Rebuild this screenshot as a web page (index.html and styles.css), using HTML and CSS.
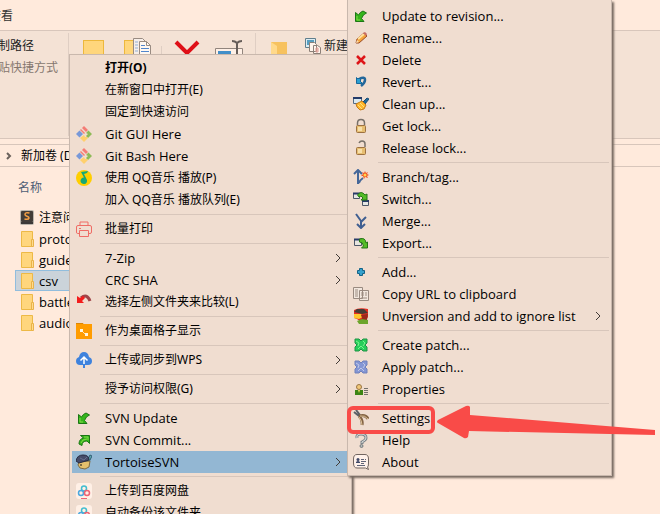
FILE: index.html
```html
<!DOCTYPE html>
<html lang="zh-CN">
<head>
<meta charset="utf-8">
<title>csv</title>
<link rel="stylesheet" href="styles.css">
</head>
<body>
<div class="explorer">
  <nav class="tabs"><a class="tab" href="#">查看</a></nav>
  <div class="ribbon">
    <div class="clipboard-group">
      <button class="ribbon-text">复制路径</button>
      <button class="ribbon-text disabled" disabled>粘贴快捷方式</button>
    </div>
    <div class="organize-group">
      <svg class="big-icon" viewBox="0 0 28 28"><rect x="4.500" y="2.500" width="20" height="24" fill="#ffd67c" stroke="#edb83c"/><path d="M22 16v4M19 18h4" stroke="#3d73bd"/></svg>
      <svg class="big-icon" viewBox="0 0 28 28"><rect x="1.500" y="2.500" width="12" height="24" fill="#ffd67c" stroke="#edb83c"/><path d="M10.500 .5h9l4 4v22h-13z" fill="#f7eee8" stroke="#998b82"/><path d="M16.500 3.500h7l4 4v20h-11z" fill="#fff8f2" stroke="#998b82"/><path d="M23.500 3.500v4h4" fill="none" stroke="#998b82"/><path d="M12 4h3M12 7h3M12 10h3M12 13h3" stroke="#91afd5"/><path d="M18 7.500h4M18 10.500h8M18 13.500h8M18 16.500h8" stroke="#5286cd"/></svg>
      <span class="small-divider"></span>
      <svg class="big-icon" viewBox="0 0 28 28"><path d="M3 4l11 11L25 4" fill="none" stroke="#df1018" stroke-width="4"/></svg>
      <svg class="big-icon" viewBox="3 0 28 28"><path d="M1.500 10.500h27v12h-27z" fill="#fff0e6" stroke="#91857d"/><path d="M4 13h13v8H4z" fill="#428fc9"/><path d="M18 3q3 0 5 2Q25 3 28 3M23 5v18" fill="none" stroke="#655d59" stroke-width="2"/></svg>
    </div>
    <div class="new-group">
      <svg class="folder-new" viewBox="0 0 18 24"><path d="M2 2h16v22H2z" fill="#f7c25f"/><path d="M2 2l6 4v18H2z" fill="#ffd98b"/></svg>
      <button class="ribbon-text new-item"><svg class="icon" viewBox="0 0 16 16"><path d="M.5.5h10v9H.5z" fill="#dcecf2" stroke="#607f8d"/><path d="M2 2h7v5H2z" fill="#569ec0"/><path d="M4.500 4.500h5l2 2v7h-7zM8.500 7.500h4l3 2v6h-7z" fill="#fff4ec" stroke="#8c8078"/><path d="M10 11h4M10 13h4M12 9v6" stroke="#de9a91"/></svg>新建项目</button>
    </div>
  </div>
  <div class="address"><svg class="chevron" viewBox="0 0 6 8"><path d="M1 1l3 3-3 3" /></svg><span>新加卷 (D:)</span></div>
  <main class="files">
    <h1 class="column-title">名称</h1>
    <ul class="file-list">
      <li class="file"><svg class="file-icon" viewBox="0 0 16 16"><rect width="14" height="15" rx="2" fill="#bcb6ad"/><rect x="1" y="1" width="12" height="11" rx="1" fill="#423d39"/><path d="M9.500 3Q5 2 5 4.500C5 7 9 5.500 9 8Q8.500 10 4.500 9" fill="none" stroke="#f6a044" stroke-width="1.500"/><path d="M1 13h12" stroke="#3c3938" stroke-width="2"/></svg><span>注意问题</span></li>
      <li class="file"><svg class="file-icon" viewBox="0 0 16 16"><path d="M1.500.5h11v15h-11z" fill="#ffd67d" stroke="#edb946"/><path d="M11.500 8.500h2v7h-2z" fill="#ffdb8f" stroke="#e9b349"/></svg><span class="latin">proto</span></li>
      <li class="file"><svg class="file-icon" viewBox="0 0 16 16"><path d="M1.500.5h11v15h-11z" fill="#ffd67d" stroke="#edb946"/><path d="M11.500 8.500h2v7h-2z" fill="#ffdb8f" stroke="#e9b349"/></svg><span class="latin">guide</span></li>
      <li class="file selected"><svg class="file-icon" viewBox="0 0 16 16"><path d="M1.500.5h11v15h-11z" fill="#ffd67d" stroke="#edb946"/><path d="M11.500 8.500h2v7h-2z" fill="#ffdb8f" stroke="#e9b349"/></svg><span class="latin">csv</span></li>
      <li class="file"><svg class="file-icon" viewBox="0 0 16 16"><path d="M1.500.5h11v15h-11z" fill="#ffd67d" stroke="#edb946"/><path d="M11.500 8.500h2v7h-2z" fill="#ffdb8f" stroke="#e9b349"/></svg><span class="latin">battle</span></li>
      <li class="file"><svg class="file-icon" viewBox="0 0 16 16"><path d="M1.500.5h11v15h-11z" fill="#ffd67d" stroke="#edb946"/><path d="M11.500 8.500h2v7h-2z" fill="#ffdb8f" stroke="#e9b349"/></svg><span class="latin">audio</span></li>
    </ul>
  </main>

  <div class="menu context-menu">
    <button class="item default"><span class="icon"></span>打开(O)</button>
    <button class="item"><span class="icon"></span>在新窗口中打开(E)</button>
    <button class="item"><span class="icon"></span>固定到快速访问</button>
    <button class="item latin"><svg class="icon" viewBox="0 0 16 16"><path d="M8 0l4 4-2 2-4-4z" fill="#f47c75"/><path d="M5 3l4 4-1 1-4-4z" fill="#f47c75"/><path d="M3.500 4.500L7 8l-3.500 3.500L0 8z" fill="#7898d8"/><path d="M12.500 4.500L16 8l-4 4-2-2 2-2-2-1z" fill="#8dba57"/><path d="M8 9l1 2h2l1 1-4 4-4-4z" fill="#ffd06d"/></svg>Git GUI Here</button>
    <button class="item latin"><svg class="icon" viewBox="0 0 16 16"><path d="M8 0l4 4-2 2-4-4z" fill="#f47c75"/><path d="M5 3l4 4-1 1-4-4z" fill="#f47c75"/><path d="M3.500 4.500L7 8l-3.500 3.500L0 8z" fill="#7898d8"/><path d="M12.500 4.500L16 8l-4 4-2-2 2-2-2-1z" fill="#8dba57"/><path d="M8 9l1 2h2l1 1-4 4-4-4z" fill="#ffd06d"/></svg>Git Bash Here</button>
    <button class="item"><svg class="icon" viewBox="0 0 16 16"><circle cx="8" cy="8" r="8" fill="#ffce00"/><path d="M5 2l7-1-1 2-3 1 3 6a3.300 3.300 0 1 1-3-2.500L5 2z" fill="#16a875"/></svg>使用 QQ音乐 播放(P)</button>
    <button class="item"><span class="icon"></span>加入 QQ音乐 播放队列(E)</button>
    <hr class="separator">
    <button class="item"><svg class="icon" viewBox="0 0 16 16"><path d="M4 4V1h8v3M3.500 12.500h-2Q.5 12.500.5 11V6q0-1.500 1.500-1.500h12q1.500 0 1.500 1.500v5q0 1.500-1.500 1.500h-1.500M3.500 9.500h9v6h-9zM3 7.500h2" fill="none" stroke="#ef6c65"/></svg>批量打印</button>
    <hr class="separator">
    <button class="item latin"><span class="icon"></span>7-Zip<svg class="chevron" viewBox="0 0 6 8"><path d="M1 0l4 4-4 4"/></svg></button>
    <button class="item latin"><span class="icon"></span>CRC SHA<svg class="chevron" viewBox="0 0 6 8"><path d="M1 0l4 4-4 4"/></svg></button>
    <button class="item"><svg class="icon" viewBox="0 0 16 16"><path d="M5 4Q11-1 14 7" fill="none" stroke="#a04448" stroke-width="3"/><path d="M1 2v7h7L6 7l3-3-2-2-3 2z" fill="#f31d1d"/></svg>选择左侧文件夹来比较(L)</button>
    <hr class="separator">
    <button class="item"><svg class="icon" viewBox="0 0 16 16"><path d="M0 0h7l1 2H0z" fill="#d98508"/><path d="M0 1h16v15H0z" fill="#ff9c00"/><path d="M5 7l5 5" stroke="#ffe5b5"/><path d="M4 6h3v3H4zM9 10h3v3H9z" fill="#fff5df"/></svg>作为桌面格子显示</button>
    <hr class="separator">
    <button class="item"><svg class="icon" viewBox="0 0 16 16"><path d="M3 5Q4 0 8 0t5 5q3 1 3 4 0 4-4 4H4q-4 0-4-4 0-3 3-4z" fill="#3e82dd"/><path d="M8 5v7M4.500 8.500L8 5l3.500 3.500" fill="none" stroke="#fff" stroke-width="1.500"/><path d="M8 12v4" stroke="#3e82dd" stroke-width="2"/></svg>上传或同步到WPS<svg class="chevron" viewBox="0 0 6 8"><path d="M1 0l4 4-4 4"/></svg></button>
    <hr class="separator">
    <button class="item"><span class="icon"></span>授予访问权限(G)<svg class="chevron" viewBox="0 0 6 8"><path d="M1 0l4 4-4 4"/></svg></button>
    <hr class="separator">
    <button class="item latin"><svg class="icon" viewBox="0 0 16 16"><path d="M2.500 4.500v9H11l-2.500-3Q10 6 13.500 5L10 3Q7 4 5.500 7z" fill="#35b51b" stroke="#1b7614"/><path d="M4 8v4h3" fill="none" stroke="#83da49"/></svg>SVN Update</button>
    <button class="item latin"><svg class="icon" viewBox="0 0 16 16"><path d="M4.500 3.500h9v8L11 9Q6 9 6 13.500L3 12Q3 7 7.500 6z" fill="#35b51b" stroke="#1b7614"/><path d="M8 5h4v3M5 11q1-4 6-4" fill="none" stroke="#83da49"/></svg>SVN Commit...</button>
    <button class="item latin active"><svg class="icon" viewBox="0 0 16 16"><path d="M12 5l2-4 2 1-2 4-2 4-4-2z" fill="#5fa9b0" stroke="#315d73"/><path d="M3 8l11-1-1 6-4 2-5-1-2-3z" fill="#e5c06c" stroke="#806b40"/><path d="M0 7Q1 1 7 1t6 5L3 9z" fill="#454b68" stroke="#272b42"/><path d="M4 4l4 2 3-3" fill="none" stroke="#686f8d"/><path d="M5 10v2" stroke="#171717"/></svg>TortoiseSVN<svg class="chevron" viewBox="0 0 6 8"><path d="M1 0l4 4-4 4"/></svg></button>
    <hr class="separator">
    <button class="item"><svg class="icon" viewBox="0 0 16 16"><rect width="16" height="16" rx="3" fill="#fff0e6"/><circle cx="8" cy="5.500" r="2.500" fill="none" stroke="#42bdd0" stroke-width="1.500"/><circle cx="5" cy="10" r="2.500" fill="none" stroke="#4aa7df" stroke-width="1.500"/><circle cx="11" cy="10" r="2.500" fill="none" stroke="#ed6274" stroke-width="1.500"/><path d="M5 15.500h6" stroke="#ed6274"/></svg>上传到百度网盘</button>
    <button class="item"><svg class="icon" viewBox="0 0 16 16"><rect width="16" height="16" rx="3" fill="#fff0e6"/><circle cx="8" cy="5.500" r="2.500" fill="none" stroke="#42bdd0" stroke-width="1.500"/><circle cx="5" cy="10" r="2.500" fill="none" stroke="#4aa7df" stroke-width="1.500"/><circle cx="11" cy="10" r="2.500" fill="none" stroke="#ed6274" stroke-width="1.500"/></svg>自动备份该文件夹</button>
  </div>

  <div class="menu svn-menu">
    <button class="item latin"><svg class="icon" viewBox="0 0 16 16"><path d="M2.500 4.500v9H11l-2.500-3Q10 6 13.500 5L10 3Q7 4 5.500 7z" fill="#35b51b" stroke="#1b7614"/><path d="M4 8v4h3" fill="none" stroke="#83da49"/></svg>Update to revision...</button>
    <button class="item latin"><svg class="icon" viewBox="0 0 16 16"><path d="M3 13l1-4 7-6 3 3-8 7z" fill="#f5a43a" stroke="#9a4b28"/><path d="M5 9l6-5" stroke="#ffe09c" stroke-width="2"/><path d="M10 3l2-1 2 2-1 2z" fill="#c66c63"/><path d="M3 13l1-3 2 2z" fill="#f8dcb0"/></svg>Rename...</button>
    <button class="item latin"><svg class="icon" viewBox="0 0 16 16"><path d="M4 4l8 8M12 4l-8 8" stroke="#de1518" stroke-width="2.500"/></svg>Delete</button>
    <button class="item latin"><svg class="icon" viewBox="0 0 16 16"><path d="M6 5q6-3 6 1 0 3-4 6" fill="none" stroke="#24679b" stroke-width="2.500"/><path d="M3.500 3.500v6h6L7 7l1-1-2-2-1 1z" fill="#2b9fd2" stroke="#18689b"/></svg>Revert...</button>
    <button class="item latin"><svg class="icon" viewBox="0 0 16 16"><path d="M.5 1.500h8v6h-8z" fill="#dbe9ef" stroke="#526b87"/><path d="M0 2h9" stroke="#253b69" stroke-width="2"/><path d="M10 6l4-4 2 1-4 5z" fill="#226c98" stroke="#174c7a"/><path d="M3 8l6-3 4 4-2 4-4 1-3-3z" fill="#ffb72d" stroke="#c67b19"/><path d="M5 9l4 4M7 7l4 4" stroke="#ffe37d"/></svg>Clean up...</button>
    <button class="item latin"><svg class="icon" viewBox="0 0 16 16"><path d="M4.500 7V5q0-3.500 3.500-3.500T11.500 5v2" fill="none" stroke="#777069" stroke-width="1.500"/><rect x="3.500" y="7.500" width="9" height="7" rx="1" fill="#e7be72" stroke="#9d7140"/><path d="M5 9h4v4H5z" fill="#f7dfaa"/></svg>Get lock...</button>
    <button class="item latin"><svg class="icon" viewBox="0 0 16 16"><path d="M6 3q1-2 3-2 3 0 3 3v3" fill="none" stroke="#777069" stroke-width="1.500"/><rect x="3.500" y="7.500" width="9" height="7" rx="1" fill="#e7be72" stroke="#9d7140"/><path d="M5 9h4v4H5z" fill="#f7dfaa"/></svg>Release lock...</button>
    <hr class="separator">
    <button class="item latin"><svg class="icon" viewBox="0 0 16 16"><path d="M5 15V2M1 5l4-4 4 4M6 14q1-3 4-5" fill="none" stroke="#456799" stroke-width="2"/><path d="M12 2l1 2 2-1-1 2 2 1-2 1 1 2-3-1-1 2-1-3-2 0 2-2-1-2 2 1z" fill="#f15624"/><circle cx="12" cy="6" r="1.500" fill="#ffd450"/></svg>Branch/tag...</button>
    <button class="item latin"><svg class="icon" viewBox="0 0 16 16"><path d="M.5 2.500h6v5h-6zM9.500 9.500h6v5h-6z" fill="#e5e6e4" stroke="#4d5767"/><path d="M0 2.500h7M9 10h7" stroke="#293b68" stroke-width="2"/><path d="M4.500 4Q8-1 12 4l2-1v6H8l2-2-2-2-2 1z" fill="#55bd27" stroke="#257615"/></svg>Switch...</button>
    <button class="item latin"><svg class="icon" viewBox="0 0 16 16"><path d="M3 1l5 7v6M13 4L8 9M4 11l4 4 4-4" fill="none" stroke="#405f91" stroke-width="2"/></svg>Merge...</button>
    <button class="item latin"><svg class="icon" viewBox="0 0 16 16"><path d="M1.500 4.500h7v6h-7z" fill="#e7e5df" stroke="#4d5767"/><path d="M1 4.500h8" stroke="#293b68" stroke-width="2"/><path d="M6.500 4q6-2 6.500 4l1.500-1v6h-6l2-2Q10 7 6.500 7z" fill="#55bd27" stroke="#257615"/></svg>Export...</button>
    <hr class="separator">
    <button class="item latin"><svg class="icon" viewBox="0 0 16 16"><path d="M6.500 4.500h3v2h2v3h-2v2h-3v-2h-2v-3h2z" fill="#36a2cd" stroke="#146286"/></svg>Add...</button>
    <button class="item latin"><svg class="icon" viewBox="0 0 16 16"><path d="M.5 1.500h9v11h-9zM6.500 4.500h9v10h-9z" fill="#f2e7de" stroke="#998a80"/><path d="M2 4h3M2 6h3M2 8h3M2 10h3M8 7h3M8 9h3M12 7h2M12 9h2M8 12h6" stroke="#9c8d82"/></svg>Copy URL to clipboard</button>
    <button class="item latin"><svg class="icon" viewBox="0 0 16 16"><path d="M1 2Q6-1 15 1v8l-3 4-4 1-4-3-3-1z" fill="#e52c22"/><path d="M4 1l7 0 4 4-6 1-8-2z" fill="#463c35"/><path d="M1 6h7l2 3-4 2-5-1z" fill="#ffc62b"/><path d="M8 7l7-1-1 6-4 1z" fill="#9c281c"/><path d="M4 13l5-2 6 1v4H6z" fill="#6ca52c"/></svg>Unversion and add to ignore list<svg class="chevron" viewBox="0 0 6 8"><path d="M1 0l4 4-4 4"/></svg></button>
    <hr class="separator">
    <button class="item latin"><svg class="icon" viewBox="0 0 16 16"><path d="M2 2h4l2 2 2-2h4v4l-2 2 2 2v4h-4l-2-2-2 2H2v-4l2-2-2-2z" fill="#27ce5b" stroke="#219347"/><path d="M3 4l3 2-1 3M10 4l2 2-2 3M5 12l3-3 3 3" fill="none" stroke="#7bf38f"/></svg>Create patch...</button>
    <button class="item latin"><svg class="icon" viewBox="0 0 16 16"><path d="M2 2h4l2 2 2-2h4v4l-2 2 2 2v4h-4l-2-2-2 2H2v-4l2-2-2-2z" fill="#8496d4" stroke="#7181ba"/><path d="M3 4l3 2-1 3M10 4l2 2-2 3M5 12l3-3 3 3" fill="none" stroke="#c0c8e7"/></svg>Apply patch...</button>
    <button class="item latin"><svg class="icon" viewBox="0 0 16 16"><circle cx="6" cy="6" r="2.500" fill="#f1c779" stroke="#9a7543"/><path d="M2 9h8v5H2z" fill="#3d8515"/><path d="M5 9h2l-1 3z" fill="#eedc65"/><path d="M11 7.500h4M11 9.500h4M11 11.500h4M11 13.500h4" stroke="#74716c"/></svg>Properties</button>
    <hr class="separator">
    <button class="item latin"><svg class="icon" viewBox="0 0 16 16"><path d="M1 2l5 4M3 0l4 5" fill="none" stroke="#5b5f66" stroke-width="2"/><path d="M6 6q7-2 9 3M6 6q4 4 3 9" fill="none" stroke="#836343" stroke-width="3"/><path d="M7 6q5-1 8 3M6 7q3 4 3 8" fill="none" stroke="#dfc49b"/></svg>Settings</button>
    <button class="item latin"><svg class="icon" viewBox="0 0 16 16"><path d="M4 6Q3 2 8 2t5 4q0 2-4 4v2" fill="none" stroke="#7e868b" stroke-width="3"/><path d="M4 6Q3 2 8 2t5 4q0 2-4 4v1" fill="none" stroke="#e1e3e1"/><circle cx="8.500" cy="14" r="1.500" fill="#b4b7b7" stroke="#737a7c"/></svg>Help</button>
    <button class="item latin"><svg class="icon" viewBox="0 0 16 16"><path d="M4 .5h8Q15.500.5 15.500 5v4q0 4-1 4l1 2.500-3-1.500H4Q.5 14 .5 9V5Q.5.500 4 .5z" fill="#fff1ea" stroke="#71645f"/><circle cx="5" cy="5.500" r="1.500" fill="#404968"/><path d="M3 9V8q2-2 4 0v1z" fill="#404968"/><path d="M8 5.500h3M12 5.500h1M8 7.500h5M8 9.500h3M4 11.500h8" stroke="#606477"/></svg>About</button>
  </div>

  <svg class="callout" viewBox="0 0 309 34"><rect x="2" y="3" width="84" height="24" rx="4" fill="none" stroke="#f94b48" stroke-width="4"/><path d="M91 15L119 1q3-1 4 1v8l185 15v5L122 26l-1 6q-2 2-4 1L91 18q-2-1 0-3z" fill="#f94b48"/></svg>
</div>
</body>
</html>
```
FILE: styles.css
```css
* { box-sizing: border-box; }

body {
  margin: 0;
  background: #ffeadc;
  color: #000;
  font: 12px/22px "Noto Sans", "Noto Sans CJK SC", sans-serif;
}

button {
  margin: 0;
  padding: 0;
  border: 0;
  background: none;
  color: inherit;
  font: inherit;
  text-align: left;
  white-space: nowrap;
}

.explorer {
  position: relative;
  height: 100vh;
  overflow: hidden;
}

.tabs {
  height: 31px;
  padding-top: 5px;
  border-bottom: 1px solid #d8c6bb;
}

.tab {
  margin-left: -11px;
  color: #333;
  text-decoration: none;
}

.ribbon {
  display: flex;
  height: 108px;
  background: #f4e2d5;
  border-bottom: 1px solid #d8c6bb;
}

.clipboard-group {
  display: flex;
  flex-direction: column;
  width: 83px;
  margin: 2px 0 2px -14px;
  padding-top: 2px;
  border-right: 1px solid #dfcec3;
}

.ribbon-text { color: #222; }
.ribbon-text.disabled { color: #85776f; }

.organize-group {
  display: flex;
  gap: 16px;
  width: 187px;
  margin: 2px 0;
  padding: 5px 0 0 10px;
  border-right: 1px solid #dfcec3;
}

.big-icon {
  flex: none;
  width: 28px;
  height: 28px;
  overflow: visible;
}

.small-divider {
  width: 1px;
  height: 24px;
  margin: 8px -5px 0 -6px;
  background: #dfcec3;
}

.new-group {
  display: flex;
  align-items: flex-start;
  gap: 18px;
  padding: 4px 0 0 13px;
}

.folder-new {
  width: 18px;
  height: 24px;
  margin-top: 5px;
}

.new-item {
  display: flex;
  align-items: center;
  gap: 3px;
}

.address {
  display: flex;
  align-items: center;
  gap: 9px;
  height: 23px;
  margin-top: 5px;
  padding-left: 6px;
  border: solid #d8c6bb;
  border-width: 1px 0;
}

.chevron {
  flex: none;
  width: 6px;
  height: 8px;
  overflow: visible;
}

.chevron path {
  fill: none;
  stroke: #423b37;
}

.address .chevron path { stroke: #6b625c; stroke-width: 2px; }

.files { padding: 10px 60px 0 15px; }

.column-title {
  margin: 0 0 8px 3px;
  color: #4d5d75;
  font-size: 12px;
  font-weight: 400;
  line-height: 22px;
}

.file-list {
  margin: 0;
  padding: 0;
  list-style: none;
}

.file {
  display: flex;
  align-items: center;
  gap: 3px;
  height: 21px;
  padding-left: 5px;
}

.file.selected {
  background: #cbd3da;
  outline: 1px solid #91bddd;
  outline-offset: -1px;
}

.file-icon {
  width: 16px;
  height: 16px;
}

.latin {
  font-family: "Open Sans", "Noto Sans", sans-serif;
  font-size: 13px;
}

.menu {
  position: absolute;
  padding: 2px;
  background: #f0ddd0;
  border: 1px solid #c9b8ad;
  box-shadow: 2px 2px 2px #796b62;
}

.context-menu {
  top: 54px;
  left: 69px;
  width: 283px;
}

.svn-menu {
  top: 0;
  left: 347px;
  width: 265px;
  padding-top: 5px;
  border-top: 0;
}

.item {
  display: flex;
  align-items: center;
  width: 100%;
  height: 22px;
  padding-left: 4px;
}

.svn-menu .item { padding-left: 3px; }

.item .icon { margin-right: 13px; }

.item .chevron {
  margin-right: 8px;
  margin-left: auto;
}

.item.default { font-weight: 700; }
.item.active { background: #93b7d3; }

.icon {
  flex: none;
  width: 16px;
  height: 16px;
}

.separator {
  height: 1px;
  margin: 3px 0 3px 28px;
  border: 0;
  background: #d8c6bb;
}

.callout {
  position: absolute;
  top: 405px;
  left: 347px;
  width: 309px;
  height: 34px;
  pointer-events: none;
}

@media (max-width: 760px) {
  .files { padding-right: 160px; }
}
```
